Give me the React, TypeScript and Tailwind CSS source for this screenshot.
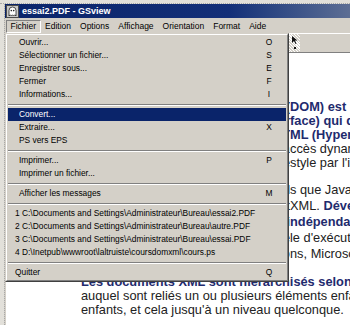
import React from "react";

type Row =
  | { sep: true }
  | { label: string; hotkey?: string; short?: boolean; active?: boolean };

const rows: Row[] = [
  { label: "Ouvrir...", hotkey: "O" },
  { label: "Sélectionner un fichier...", hotkey: "S" },
  { label: "Enregistrer sous...", hotkey: "E" },
  { label: "Fermer", hotkey: "F" },
  { label: "Informations...", hotkey: "I" },
  { sep: true },
  { label: "Convert...", active: true },
  { label: "Extraire...", hotkey: "X" },
  { label: "PS vers EPS" },
  { sep: true },
  { label: "Imprimer...", hotkey: "P" },
  { label: "Imprimer un fichier..." },
  { sep: true },
  { label: "Afficher les messages", hotkey: "M" },
  { sep: true },
  { label: "1 C:\\Documents and Settings\\Administrateur\\Bureau\\essai2.PDF", short: true },
  { label: "2 C:\\Documents and Settings\\Administrateur\\Bureau\\autre.PDF", short: true },
  { label: "3 C:\\Documents and Settings\\Administrateur\\Bureau\\essai.PDF", short: true },
  { label: "4 D:\\Inetpub\\wwwroot\\laltruiste\\coursdomxml\\cours.ps", short: true },
  { sep: true },
  { label: "Quitter", hotkey: "Q", short: true },
];

const menus = ["Fichier", "Edition", "Options", "Affichage", "Orientation", "Format", "Aide"];

// a line whose start is hidden under the open menu
function Line({ head, tail, bold }: { head: string; tail: React.ReactNode; bold?: boolean }) {
  return (
    <div className={`flex whitespace-nowrap ${bold ? "font-bold text-[#1f2b6e]" : ""}`}>
      <span className="flex w-[209px] shrink-0 justify-end overflow-hidden">
        <span className="shrink-0">{head}</span>
      </span>
      <span>{tail}</span>
    </div>
  );
}

function GsIcon() {
  return (
    <svg width="13" height="13" viewBox="0 0 13 13">
      <rect x="0.5" y="0.5" width="12" height="12" fill="#c8c8c8" stroke="#4a4a4a" />
      <path d="M3 11 V5.5 a3.5 3.5 0 0 1 7 0 V11 l-1.2 -1.2 l-1.2 1.2 l-1.1 -1.2 l-1.1 1.2 l-1.2 -1.2 z" fill="#fff" stroke="#222" strokeWidth="0.8" />
      <circle cx="5.3" cy="5.6" r="0.8" fill="#222" />
      <circle cx="7.7" cy="5.6" r="0.8" fill="#222" />
    </svg>
  );
}

export default function App() {
  return (
    <div className="relative h-[325px] w-[350px] overflow-hidden bg-[#e2e0da] font-['Liberation_Sans',Arial,sans-serif]">
      <div className="h-[4px] border-b border-dotted border-[#a8a8a8]" />
      <div className="ml-[4px] flex h-[321px] flex-col border-l border-dotted border-[#a8a8a8] bg-[#d4d0c8]">
        {/* title bar */}
        <div className="flex h-[14px] items-center gap-[3px] bg-linear-to-r from-[#0a246a] via-[#132f78] via-65% to-[#5d6e94] pl-[1px]">
          <GsIcon />
          <span className="text-[9px] font-bold leading-none text-white">essai2.PDF - GSview</span>
        </div>

        {/* menu bar */}
        <div className="flex h-[15px] items-end pl-[1px] text-[8.5px] leading-none text-black">
          {menus.map((m, i) => (
            <div
              key={m}
              className={`flex h-[13px] items-center border px-[3.5px] ${
                i === 0 ? "border-t-[#808080] border-l-[#808080] border-b-white border-r-white" : "border-transparent"
              }`}
            >
              {m}
            </div>
          ))}
        </div>

        {/* toolbar */}
        <div className="flex h-[20px] items-center border-t border-white border-b border-b-[#808080]">
          <div className="ml-[271px] flex h-[18px] w-[24px] items-start justify-end bg-[repeating-linear-gradient(45deg,#d4d0c8_0px,#d4d0c8_1px,#ffffff_1px,#ffffff_2px)]">
            <svg width="8" height="16" viewBox="0 0 8 16" className="mr-[1px]">
              <path d="M1 2 L1 9 L3 7 L4.5 10 L5.5 9.5 L4 6.5 L6.5 6.5 Z" fill="#111" />
              <rect x="3" y="13" width="2" height="2" fill="#111" />
            </svg>
          </div>
        </div>

        {/* document */}
        <div className="ml-[1px] flex-1 bg-white pl-[75px] pt-[47px] text-[12.8px] text-[#222]">
          <div className="leading-[14px]">
            <Line bold head="Le Document Object Model (" tail="DOM) est une interface de programmation" />
            <Line bold head="(Application Programming Inter" tail="face) qui définit la structure" />
            <Line bold head="des documents XML et HT" tail="ML (Hyper-Text Markup Language)" />
            <Line head="et la manière d'y a" tail="ccès dynamique" />
            <Line head="pour en modifier le contenu, la structure et le" tail="style par l'intermédiaire de scripts." />
          </div>
          <div className="mt-[12px] leading-[16px]">
            <Line head="Le DOM peut être utilisé par des langages tel" tail="s que JavaScript ou VBScript" />
            <Line
              head="pour manipuler des documents HTML et"
              tail={
                <>
                  XML. <b className="text-[#1f2b6e]">Développé par le W3C,</b>
                </>
              }
            />
            <Line bold head="le DOM est i" tail="ndépendant des plateformes" />
            <Line head="et des langages ainsi que du modè" tail="le d'exécution" />
            <Line head="utilisé dans les navigateurs et applicatio" tail="ns, Microsoft Internet Explorer" />
          </div>
          <div className="mt-[13px] whitespace-nowrap leading-[14px]">
            <div>
              <b className="text-[#1f2b6e]">Les documents XML sont hiérarchisés selon</b> une structure arborescente
            </div>
            <div>auquel sont reliés un ou plusieurs éléments enfants, eux-mêmes</div>
            <div>enfants, et cela jusqu'à un niveau quelconque.</div>
          </div>
        </div>
      </div>

      {/* open "Fichier" menu */}
      <div className="absolute left-[5px] top-[33px] w-[284px] border border-t-[#d4d0c8] border-l-[#d4d0c8] border-r-[#404040] border-b-[#404040]">
        <div className="border border-t-white border-l-white border-r-[#808080] border-b-[#808080] bg-[#d4d0c8] p-[1px] text-[8.4px] leading-none text-black">
          {rows.map((r, i) =>
            "sep" in r ? (
              <div key={i} className="flex h-[7px] items-center">
                <div className="h-[2px] w-full border-t border-t-[#808080] border-b border-b-white" />
              </div>
            ) : (
              <div
                key={i}
                className={`flex h-[13px] items-center whitespace-nowrap ${r.short ? "pl-[7px]" : "pl-[11px]"} ${
                  r.active ? "bg-[#0a246a] text-white" : ""
                }`}
              >
                <span>{r.label}</span>
                <span className="ml-auto mr-[12px] w-[10px] text-center">{r.hotkey}</span>
              </div>
            )
          )}
        </div>
      </div>
    </div>
  );
}
